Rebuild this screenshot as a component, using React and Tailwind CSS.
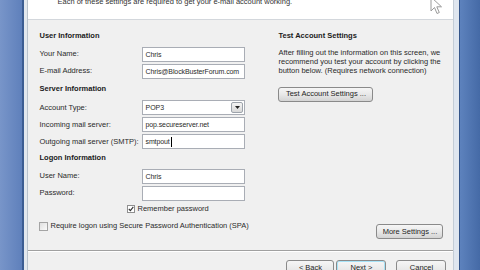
export default function App() {
  const font = { fontFamily: '"Liberation Sans", Arial, sans-serif' };

  const Field = ({ label, value, cursor }) => (
    <div className="flex h-[15px] items-center">
      <div className="w-[103px] text-[7.5px] leading-none text-[#2a2a2a]">{label}</div>
      <div className="flex h-[15px] w-[103px] items-center overflow-hidden whitespace-nowrap border border-[#a9adb5] bg-white px-[2px] text-[7px] leading-none tracking-[-0.1px] text-[#2a2a2a]">
        {value}
        {cursor && <span className="ml-[1px] h-[10px] w-[1px] bg-black" />}
      </div>
    </div>
  );

  const Heading = ({ children, className }) => (
    <div className={`text-[7.5px] font-bold leading-none text-[#1a1a1a] ${className}`}>{children}</div>
  );

  const btn =
    "flex items-center justify-center rounded-[3px] border border-[#8a8a8a] bg-gradient-to-b from-[#f6f6f6] via-[#e8e8e8] to-[#d4d4d4] text-[7.5px] leading-none text-[#1e1e1e]";

  return (
    <div className="flex h-[270px] w-[480px] overflow-hidden bg-[#f0f0f0]" style={font}>
      {/* left desktop strip */}
      <div className="w-[22px] bg-gradient-to-r from-[#7895c9] to-[#5f80bb]" />
      <div className="w-[2px] bg-[#3c5d92]" />
      <div className="w-[5px] bg-[#e3e8ee] border-r border-[#b9c2cc]" />

      {/* window */}
      <div className="relative flex flex-1 flex-col">
        <div className="h-[20px] shrink-0 border-b border-[#d3d7dc] bg-white">
          <div className="-mt-[3px] pl-[29px] text-[7.5px] leading-[9px] text-[#333]">
            Each of these settings are required to get your e-mail account working.
          </div>
        </div>

        <div className="flex flex-1">
          {/* left column */}
          <div className="flex w-[249px] flex-col pl-[11px]">
            <Heading className="mt-[12px]">User Information</Heading>
            <div className="mt-[7px] flex flex-col gap-[2px]">
              <Field label="Your Name:" value="Chris" />
              <Field label="E-mail Address:" value="Chris@BlockBusterForum.com" />
            </div>

            <Heading className="mt-[6px]">Server Information</Heading>
            <div className="mt-[8px] flex flex-col gap-[2px]">
              <div className="flex h-[15px] items-center">
                <div className="w-[103px] text-[7.5px] leading-none text-[#2a2a2a]">Account Type:</div>
                <div className="flex h-[15px] w-[103px] items-center justify-between border border-[#a9adb5] bg-white pl-[2px] pr-[1px] text-[7px] leading-none text-[#2a2a2a]">
                  POP3
                  <div className="flex h-[11px] w-[12px] items-center justify-center rounded-[2px] border border-[#9da3ab] bg-gradient-to-b from-[#f4f4f4] to-[#d8d8d8]">
                    <svg width="5" height="3" viewBox="0 0 5 3">
                      <path d="M0 0h5L2.5 3z" fill="#222" />
                    </svg>
                  </div>
                </div>
              </div>
              <Field label="Incoming mail server:" value="pop.secureserver.net" />
              <Field label="Outgoing mail server (SMTP):" value="smtpout" cursor />
            </div>

            <Heading className="mt-[5px]">Logon Information</Heading>
            <div className="mt-[7px] flex flex-col gap-[2px]">
              <Field label="User Name:" value="Chris" />
              <Field label="Password:" value="" />
            </div>

            <div className="mt-[4px] flex items-center pl-[88px]">
              <div className="flex h-[8px] w-[8px] items-center justify-center border border-[#8f8f8f] bg-white">
                <svg width="6" height="6" viewBox="0 0 6 6">
                  <path d="M0.8 3 L2.4 4.7 L5.3 0.9" fill="none" stroke="#333" strokeWidth="1.1" />
                </svg>
              </div>
              <span className="ml-[2px] text-[7.5px] leading-none text-[#2a2a2a]">Remember password</span>
            </div>

            <div className="mt-[9px] flex items-center">
              <div className="h-[9px] w-[9px] border border-[#a4a4a4] bg-gradient-to-br from-[#e0e0e0] to-[#fbfbfb]" />
              <span className="ml-[2px] text-[7.5px] leading-none text-[#2a2a2a]">
                Require logon using Secure Password Authentication (SPA)
              </span>
            </div>
          </div>

          {/* right column */}
          <div className="flex flex-1 flex-col pl-[1px] pr-[10px]">
            <Heading className="mt-[12px]">Test Account Settings</Heading>
            <div className="mt-[8px] text-[7.5px] leading-[9px] text-[#2a2a2a]">
              After filling out the information on this screen, we
              <br />
              recommend you test your account by clicking the
              <br />
              button below. (Requires network connection)
            </div>
            <div className={`${btn} mt-[12px] h-[15px] w-[95px]`}>Test Account Settings ...</div>
            <div className="flex-1" />
            <div className={`${btn} mb-[11px] ml-[98px] h-[15px] w-[67px]`}>More Settings ...</div>
          </div>
        </div>

        {/* separator + footer */}
        <div className="h-[1px] bg-[#a0a0a0]" />
        <div className="h-[1px] bg-white" />
        <div className="flex h-[18px] shrink-0 gap-[2px] pl-[258px] pt-[8px]">
          <div className={`${btn} h-[20px] w-[48px] items-start pt-[3px]`}>&lt; Back</div>
          <div className={`${btn} h-[20px] w-[50px] items-start pt-[3px] border-[#3c8ccc] shadow-[inset_0_0_0_1px_#a7e3f7]`}>Next &gt;</div>
          <div className={`${btn} ml-[8px] h-[20px] w-[50px] items-start pt-[3px]`}>Cancel</div>
        </div>

        {/* mouse pointer */}
        <svg className="absolute left-[402px] top-[-4px]" width="14" height="20" viewBox="0 0 14 20">
          <path
            d="M1 1 L1 15 L4.5 11.5 L7 17.5 L9.3 16.5 L6.8 10.8 L11.5 10.8 Z"
            fill="#fff"
            stroke="#9a9a9a"
            strokeWidth="1"
          />
        </svg>
      </div>

      {/* right frame and desktop strip */}
      <div className="w-[6px] border-l border-[#c3ccd6] bg-[#dfe6ef]" />
      <div className="w-[1px] bg-[#34558a]" />
      <div className="w-[20px] bg-gradient-to-r from-[#5d82bd] to-[#456aa6]" />
    </div>
  );
}
